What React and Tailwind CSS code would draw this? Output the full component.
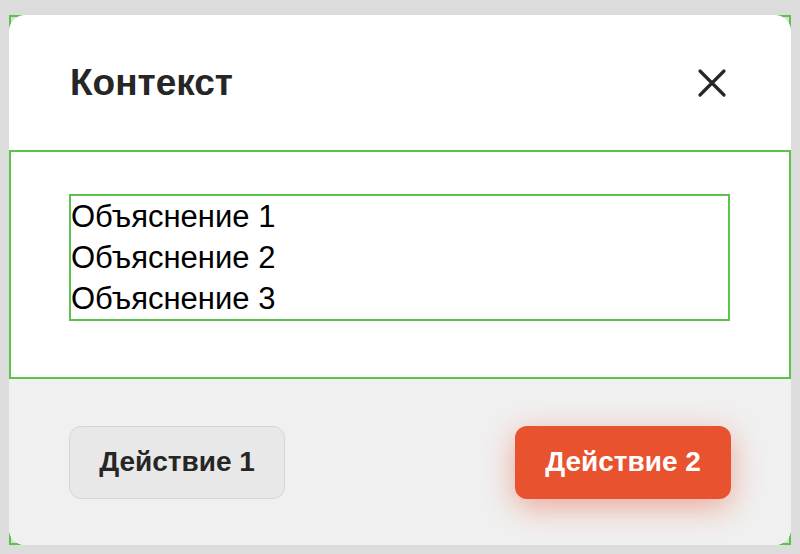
import React from 'react';

const CloseIcon = () => (
  <svg width="30" height="30" viewBox="0 0 30 30" fill="none" stroke="#262626" strokeWidth="3.2" strokeLinecap="round">
    <path d="M3 3 L27 27 M27 3 L3 27" />
  </svg>
);

const ContextDialog = () => {
  const items = ['Объяснение 1', 'Объяснение 2', 'Объяснение 3'];

  return (
    <div className="shadow-[inset_0_0_0_2px_#5cc24c]">
      <div className="rounded-2xl overflow-hidden bg-white h-[530px] flex flex-col">
        <div className="h-[135px] flex items-center justify-between pl-[61px] pr-[64px]">
          <h2 className="text-[37px] font-bold text-[#262626] leading-none">Контекст</h2>
          <button className="flex items-center justify-center">
            <CloseIcon />
          </button>
        </div>

        <div className="border-2 border-[#5cc24c] pt-[42px] pb-[56px] pl-[58px] pr-[59px]">
          <ul className="border-2 border-[#5cc24c] text-[31px] leading-[41px] text-black">
            {items.map((item) => (
              <li key={item}>{item}</li>
            ))}
          </ul>
        </div>

        <div className="flex-1 bg-[#f0f0f0] flex items-center justify-between px-[60px]">
          <button className="w-[216px] h-[73px] rounded-xl bg-[#e8e8e8] border border-[#d6d6d6] text-[28px] font-bold text-[#262626]">
            Действие 1
          </button>
          <button className="w-[216px] h-[73px] rounded-xl bg-[#e9522e] text-[28px] font-bold text-white shadow-[0_8px_30px_rgba(233,82,46,0.45)]">
            Действие 2
          </button>
        </div>
      </div>
    </div>
  );
};

export default function App() {
  return (
    <div className="w-[800px] h-[554px] bg-[#dcdcdc] pt-[15px] pl-[9px] pr-[9px] font-['Liberation_Sans',Arial,sans-serif]">
      <ContextDialog />
    </div>
  );
}
